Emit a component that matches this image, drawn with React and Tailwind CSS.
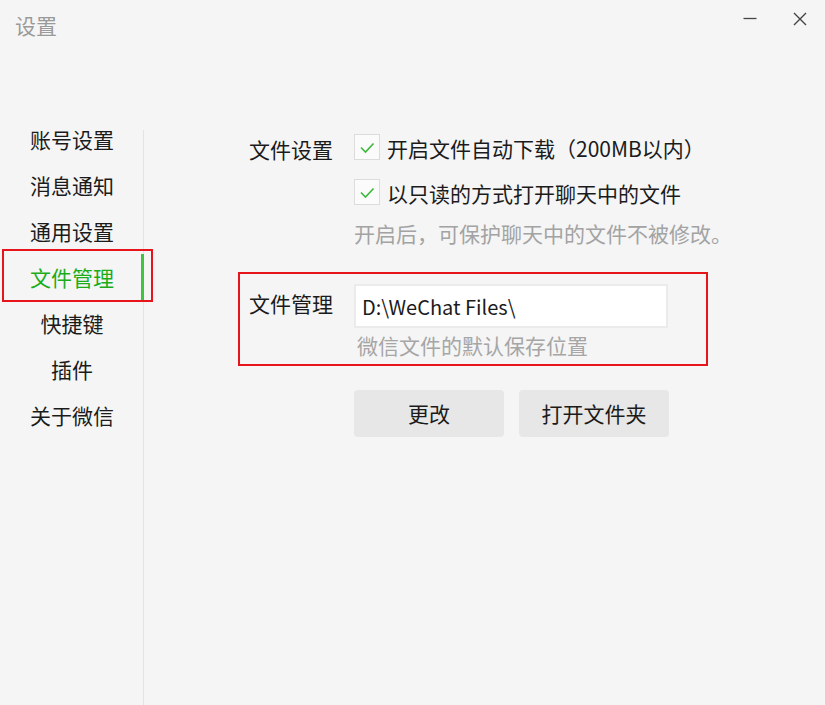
import React from "react";

const font = "font-['Noto_Sans_CJK_SC','Noto_Sans',sans-serif]";

function Check() {
  return (
    <div className="w-[26px] h-[26px] border border-[#dcdcdc] bg-[#fbfbfb] flex items-center justify-center shrink-0">
      <svg width="24" height="24" viewBox="0 0 24 24">
        <path d="M6 12.5 L10.5 17 L18.5 8.5" fill="none" stroke="#3cb93c" strokeWidth="1.6" />
      </svg>
    </div>
  );
}

export default function App() {
  const items = ["账号设置", "消息通知", "通用设置", "文件管理", "快捷键", "插件", "关于微信"];
  return (
    <div className={`w-[825px] h-[705px] bg-[#f5f5f5] overflow-hidden flex flex-col text-[#1b1b1b] ${font}`}>
      <div className="h-[116px] flex items-start justify-between shrink-0">
        <div className="pl-[15px] pt-[15px] text-[21px] leading-[21px] text-[#9a9a9a]">设置</div>
        <div className="flex">
          <div className="w-[50px] h-[37px] flex items-center justify-center">
            <svg width="14" height="14" viewBox="0 0 14 14">
              <path d="M0.5 6.5 H13.5" stroke="#444" strokeWidth="1.3" />
            </svg>
          </div>
          <div className="w-[50px] h-[37px] flex items-center justify-center">
            <svg width="14" height="14" viewBox="0 0 14 14">
              <path d="M1 1 L13 13 M13 1 L1 13" stroke="#444" strokeWidth="1.4" />
            </svg>
          </div>
        </div>
      </div>
      <div className="flex flex-1">
        <div className="relative w-[144px] shrink-0 flex flex-col">
          <div className="absolute right-0 top-[14px] bottom-0 w-px bg-[#e3e3e3]" />
          {items.map((t, i) => (
            <div
              key={t}
              className={`relative h-[46px] flex items-center justify-center text-[21px] leading-[21px] ${
                i === 3 ? "text-[#1aad19]" : ""
              }`}
            >
              <span className="pt-[1px]">{t}</span>
              {i === 3 && (
                <>
                  <div className="absolute right-0 top-0 bottom-0 w-[3px] bg-[#3fc43f]" />
                  <div className="absolute left-[2px] -top-[5px] w-[151px] h-[53px] border-2 border-[#e8141c] z-10" />
                </>
              )}
            </div>
          ))}
        </div>
        <div className="flex-1 pl-[105px] pt-[18px] text-[21px] leading-[21px]">
          <div className="flex">
            <div className="w-[105px] h-[26px] flex items-center">
              <span className="pt-[4px]">文件设置</span>
            </div>
            <div className="flex flex-col">
              <div className="h-[26px] flex items-center gap-[7px]">
                <Check />
                <span className="pt-[3px]">开启文件自动下载（200MB以内）</span>
              </div>
              <div className="h-[26px] mt-[19px] flex items-center gap-[7px]">
                <Check />
                <span className="pt-[3px]">以只读的方式打开聊天中的文件</span>
              </div>
              <div className="mt-[18px] text-[#a3a3a3]">开启后，可保护聊天中的文件不被修改。</div>
            </div>
          </div>
          <div className="relative flex mt-[40px]">
            <div className="absolute -left-[11px] -top-[12px] w-[470px] h-[94px] border-2 border-[#e8141c]" />
            <div className="w-[105px] h-[38px] flex items-center">文件管理</div>
            <div className="flex flex-col">
              <div className="w-[314px] h-[44px] border-2 border-[#ebebeb] bg-white flex items-center pl-[6px] text-[20px]">
                D:\WeChat Files\
              </div>
              <div className="mt-[7px] pl-[3px] text-[#a6a6a6]">微信文件的默认保存位置</div>
              <div className="flex gap-[15px] mt-[34px]">
                <div className="w-[150px] h-[47px] rounded-[4px] bg-[#e7e7e7] flex items-center justify-center">更改</div>
                <div className="w-[150px] h-[47px] rounded-[4px] bg-[#e7e7e7] flex items-center justify-center">打开文件夹</div>
              </div>
            </div>
          </div>
        </div>
      </div>
    </div>
  );
}
